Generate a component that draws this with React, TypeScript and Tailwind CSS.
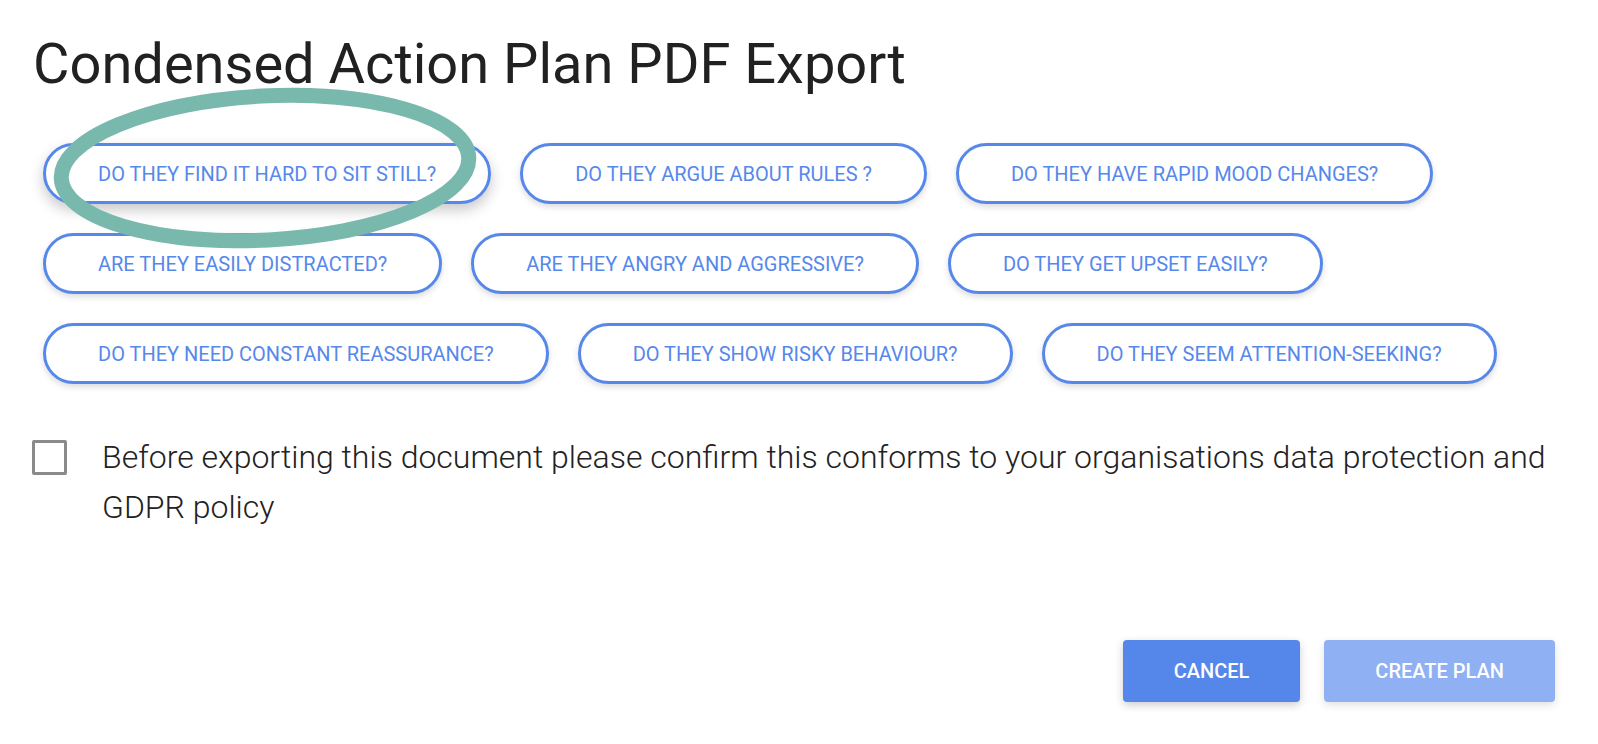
import { useState } from "react";

const ROWS = [
  ["DO THEY FIND IT HARD TO SIT STILL?", "DO THEY ARGUE ABOUT RULES ?", "DO THEY HAVE RAPID MOOD CHANGES?"],
  ["ARE THEY EASILY DISTRACTED?", "ARE THEY ANGRY AND AGGRESSIVE?", "DO THEY GET UPSET EASILY?"],
  ["DO THEY NEED CONSTANT REASSURANCE?", "DO THEY SHOW RISKY BEHAVIOUR?", "DO THEY SEEM ATTENTION-SEEKING?"],
];

function Chip({ label, raised }: { label: string; raised?: boolean }) {
  return (
    <button
      className={`h-[61px] px-[52px] rounded-full border-[3px] border-[#5688eb] bg-white text-[#5688eb] text-[20px] leading-none whitespace-nowrap ${
        raised ? "shadow-[0_6px_14px_rgba(0,0,0,0.22)]" : "shadow-[0_3px_6px_rgba(0,0,0,0.14)]"
      }`}
    >
      {label}
    </button>
  );
}

export default function App() {
  const [agreed, setAgreed] = useState(false);

  return (
    <div className="relative w-[1598px] h-[744px] bg-white overflow-hidden font-['Roboto','Liberation_Sans',sans-serif]">
      <div className="pl-[33px] pr-[43px] pt-[36px]">
        <h1 className="text-[56px] leading-none text-[#212121] font-normal">Condensed Action Plan PDF Export</h1>

        {/* Question chips */}
        <div className="mt-[51px] pl-[10px] flex flex-col gap-[29px]">
          {ROWS.map((row, r) => (
            <div key={r} className="flex gap-[29px]">
              {row.map((q, i) => (
                <Chip key={q} label={q} raised={r === 0 && i === 0} />
              ))}
            </div>
          ))}
        </div>

        {/* GDPR confirmation */}
        <div className="mt-[48px] flex items-start gap-[35px]">
          <button
            onClick={() => setAgreed(!agreed)}
            className="mt-[8px] ml-[-1px] w-[35px] h-[35px] shrink-0 border-[3px] border-[#8a8a8a] rounded-[2px] bg-white"
          >
            {agreed && <span className="block w-full h-full bg-[#5688eb]" />}
          </button>
          <p className="text-[32px] leading-[50px] font-light text-[#222]">
            Before exporting this document please confirm this conforms to your organisations data protection and GDPR policy
          </p>
        </div>

        {/* Actions */}
        <div className="mt-[108px] flex justify-end gap-[24px]">
          <button className="h-[62px] px-[51px] rounded-[4px] bg-[#5587eb] text-white text-[20px] font-medium shadow-[0_3px_8px_rgba(0,0,0,0.2)]">
            CANCEL
          </button>
          <button className="h-[62px] px-[51px] rounded-[4px] bg-[#8fb0f2] text-white text-[20px] font-medium shadow-[0_3px_8px_rgba(0,0,0,0.12)]">
            CREATE PLAN
          </button>
        </div>
      </div>

      {/* hand-drawn highlight */}
      <svg className="absolute left-0 top-0 pointer-events-none" width="600" height="300">
        <ellipse
          cx="265"
          cy="168"
          rx="204"
          ry="72"
          fill="none"
          stroke="#79b8ac"
          strokeWidth="15"
          transform="rotate(-3 265 168)"
        />
      </svg>
    </div>
  );
}
